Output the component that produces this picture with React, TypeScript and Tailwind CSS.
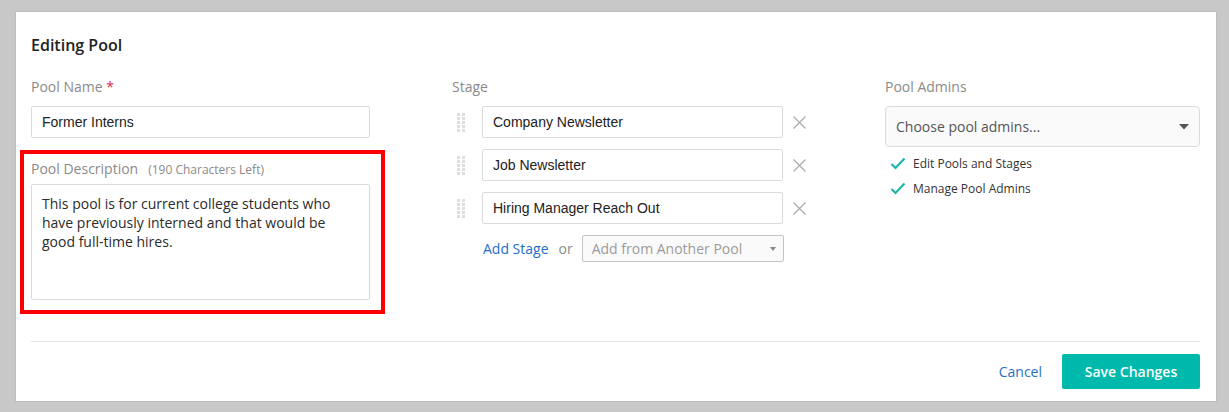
const stages = ["Company Newsletter", "Job Newsletter", "Hiring Manager Reach Out"];
const perms = ["Edit Pools and Stages", "Manage Pool Admins"];

const DragHandle = () => (
  <svg width="9" height="19" viewBox="0 0 9 19" className="shrink-0">
    {[0, 1, 2, 3, 4].map((r) =>
      [0, 1].map((c) => (
        <rect key={`${r}-${c}`} x={c * 5} y={r * 4} width="3" height="3" fill="#dedede" />
      ))
    )}
  </svg>
);

const Cross = () => (
  <svg width="13" height="13" viewBox="0 0 13 13" className="shrink-0">
    <path d="M0.5 0.5 L12.5 12.5 M12.5 0.5 L0.5 12.5" stroke="#a8a8a8" strokeWidth="1.1" />
  </svg>
);

const Check = () => (
  <svg width="16" height="13" viewBox="0 0 16 13" className="shrink-0">
    <polyline points="1.5,7 5.5,11 14.5,1.5" fill="none" stroke="#1db5ad" strokeWidth="2.2" />
  </svg>
);

const Label: React.FC<{ children: React.ReactNode }> = ({ children }) => (
  <div className="h-5 text-[14px] leading-5 text-[#8a8a8a]">{children}</div>
);

export default function App() {
  return (
    <div className="h-[412px] w-full bg-[#c8c8c8] pl-4 pt-3 font-['Open_Sans',sans-serif]">
      <div className="flex h-[389px] w-[1200px] flex-col bg-white pl-[15px] pr-4 pt-[21px] shadow-[0_0_0_1px_#bdbdbd]">
        <h2 className="text-[16px] font-semibold leading-6 text-[#222]">Editing Pool</h2>

        <div className="mt-5 flex h-[264px] items-start">
          {/* name + description */}
          <div className="w-[339px] shrink-0">
            <Label>
              Pool Name <span className="text-[#e2245a]">*</span>
            </Label>
            <div className="mt-[9px] flex h-8 items-center rounded-[2px] border border-[#dcdcdc] px-[10px] pt-px font-['Liberation_Sans',sans-serif] text-[14px] text-[#222]">
              Former Interns
            </div>

            <div className="relative mt-[21px]">
              <div className="flex h-5 items-baseline gap-[10px] leading-5">
                <span className="text-[14px] text-[#8a8a8a]">Pool Description</span>
                <span className="text-[12px] text-[#8a8a8a]">(190 Characters Left)</span>
              </div>
              <div className="mt-[5px] h-[116px] rounded-[2px] border border-[#dcdcdc] px-[10px] pt-[9px] text-[14px] leading-[19px] text-[#2b2b2b]">
                This pool is for current college students who have previously interned and that would be good full-time hires.
              </div>
              <div className="pointer-events-none absolute -top-[9px] -bottom-[14px] -left-[11px] -right-[15px] border-4 border-[#ff0000]" />
            </div>
          </div>

          {/* stages */}
          <div className="ml-[82px] w-[353px] shrink-0">
            <Label>Stage</Label>
            <div className="mt-[9px] flex flex-col gap-[11px]">
              {stages.map((s) => (
                <div key={s} className="flex items-center">
                  <div className="ml-[5px] mr-4 shrink-0">
                    <DragHandle />
                  </div>
                  <div className="flex h-8 w-[301px] shrink-0 items-center rounded-[2px] border border-[#dcdcdc] px-[10px] pt-px font-['Liberation_Sans',sans-serif] text-[14px] text-[#222]">
                    {s}
                  </div>
                  <div className="ml-[10px]">
                    <Cross />
                  </div>
                </div>
              ))}
              <div className="ml-[31px] flex items-center whitespace-nowrap">
                <span className="text-[14px] text-[#1f6fcb]">Add Stage</span>
                <span className="ml-[10px] text-[14px] text-[#8a8a8a]">or</span>
                <div className="ml-[9px] flex h-[27px] w-[202px] shrink-0 items-center justify-between rounded-[2px] border border-[#c4c4c4] bg-[#fafafa] pl-[9px] pr-[7px] text-[14px] text-[#9a9a9a]">
                  <span>Add from Another Pool</span>
                  <svg width="6" height="4" viewBox="0 0 6 4">
                    <polygon points="0,0 6,0 3,4" fill="#888" />
                  </svg>
                </div>
              </div>
            </div>
          </div>

          {/* admins */}
          <div className="ml-20 w-[315px] shrink-0">
            <Label>Pool Admins</Label>
            <div className="mt-[9px] flex h-[41px] items-center justify-between rounded-[4px] border border-[#dcdcdc] bg-[#fafafa] pl-[10px] pr-[10px] text-[14px] text-[#555]">
              <span>Choose pool admins...</span>
              <svg width="10" height="6" viewBox="0 0 10 6">
                <polygon points="0,0 10,0 5,5.5" fill="#555" />
              </svg>
            </div>
            <div className="mt-[8px] flex flex-col gap-[8px] pl-[5px]">
              {perms.map((p) => (
                <div key={p} className="flex h-[17px] items-center gap-[7px] text-[12px] text-[#333]">
                  <Check />
                  <span>{p}</span>
                </div>
              ))}
            </div>
          </div>
        </div>

        <div className="h-px bg-[#e1e1e1]" />

        <div className="mt-3 flex items-center justify-end gap-5">
          <span className="text-[14px] text-[#2d6fc4]">Cancel</span>
          <button className="h-[35px] w-[138px] rounded-[2px] bg-[#00b9ad] text-[14px] font-semibold text-white">
            Save Changes
          </button>
        </div>
      </div>
    </div>
  );
}
